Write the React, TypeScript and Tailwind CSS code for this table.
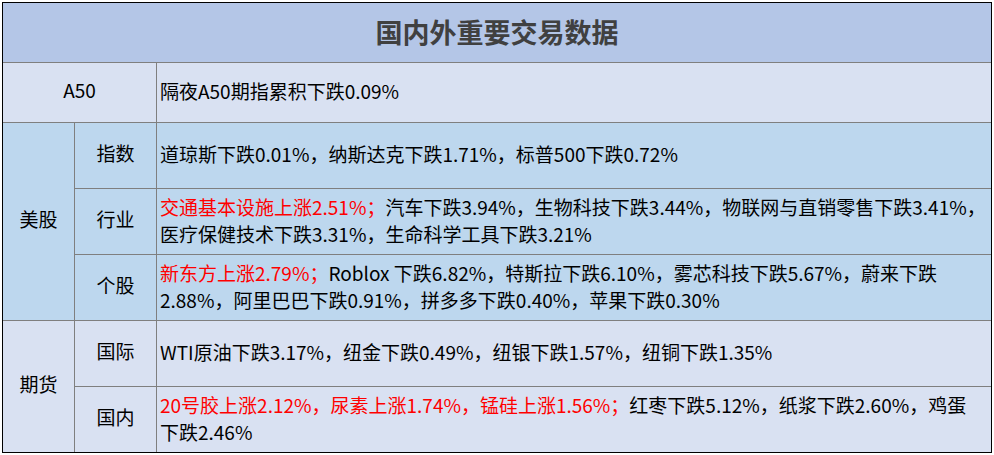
import React from 'react';

type Seg = { text: string; red?: boolean };

const font = { fontFamily: '"Noto Sans CJK SC", "Noto Sans", sans-serif' };

// each row: list of lines, each line a list of segments
const Lines: React.FC<{ lines: Seg[][] }> = ({ lines }) => (
  <div className="leading-[27px]">
    {lines.map((line, i) => (
      <div key={i} className="whitespace-nowrap">
        {line.map((s, j) => (
          <span key={j} className={s.red ? 'text-[#ff0000]' : 'text-black'}>
            {s.text}
          </span>
        ))}
      </div>
    ))}
  </div>
);

const Label: React.FC<{ children: React.ReactNode; className?: string }> = ({ children, className }) => (
  <div className={`flex items-center justify-center pb-[4px] text-black ${className ?? ''}`}>{children}</div>
);

const Content: React.FC<{ lines: Seg[][]; className?: string }> = ({ lines, className }) => (
  <div className={`flex items-center pl-[3px] pb-[4px] ${className ?? ''}`}>
    <Lines lines={lines} />
  </div>
);

const App: React.FC = () => {
  return (
    <div className="bg-white w-[994px] h-[455px] pt-[2px] pl-[2px]" style={font}>
      <div className="w-[990px] border border-black bg-[#7f7f7f] grid grid-cols-[71px_81px_834px] grid-rows-[59px_59px_65px_65px_65px_65px_65px] gap-px text-[19px]">
        {/* title */}
        <div className="col-span-3 bg-[#b4c6e7] flex items-center justify-center">
          <span className="text-[27px] font-bold text-[#404040]">国内外重要交易数据</span>
        </div>

        {/* A50 */}
        <Label className="col-span-2 bg-[#d9e1f2]">A50</Label>
        <Content className="bg-[#d9e1f2]" lines={[[{ text: '隔夜A50期指累积下跌0.09%' }]]} />

        {/* 美股 */}
        <Label className="row-span-3 bg-[#bdd7ee]">美股</Label>
        <Label className="bg-[#bdd7ee]">指数</Label>
        <Content
          className="bg-[#bdd7ee]"
          lines={[[{ text: '道琼斯下跌0.01%，纳斯达克下跌1.71%，标普500下跌0.72%' }]]}
        />
        <Label className="bg-[#bdd7ee]">行业</Label>
        <Content
          className="bg-[#bdd7ee]"
          lines={[
            [
              { text: '交通基本设施上涨2.51%；', red: true },
              { text: '汽车下跌3.94%，生物科技下跌3.44%，物联网与直销零售下跌3.41%，' },
            ],
            [{ text: '医疗保健技术下跌3.31%，生命科学工具下跌3.21%' }],
          ]}
        />
        <Label className="bg-[#bdd7ee]">个股</Label>
        <Content
          className="bg-[#bdd7ee]"
          lines={[
            [
              { text: '新东方上涨2.79%；', red: true },
              { text: 'Roblox 下跌6.82%，特斯拉下跌6.10%，雾芯科技下跌5.67%，蔚来下跌' },
            ],
            [{ text: '2.88%，阿里巴巴下跌0.91%，拼多多下跌0.40%，苹果下跌0.30%' }],
          ]}
        />

        {/* 期货 */}
        <Label className="row-span-2 bg-[#d9e1f2]">期货</Label>
        <Label className="bg-[#d9e1f2]">国际</Label>
        <Content
          className="bg-[#d9e1f2]"
          lines={[[{ text: 'WTI原油下跌3.17%，纽金下跌0.49%，纽银下跌1.57%，纽铜下跌1.35%' }]]}
        />
        <Label className="bg-[#d9e1f2]">国内</Label>
        <Content
          className="bg-[#d9e1f2]"
          lines={[
            [
              { text: '20号胶上涨2.12%，尿素上涨1.74%，锰硅上涨1.56%；', red: true },
              { text: '红枣下跌5.12%，纸浆下跌2.60%，鸡蛋' },
            ],
            [{ text: '下跌2.46%' }],
          ]}
        />
      </div>
    </div>
  );
};

export default App;
